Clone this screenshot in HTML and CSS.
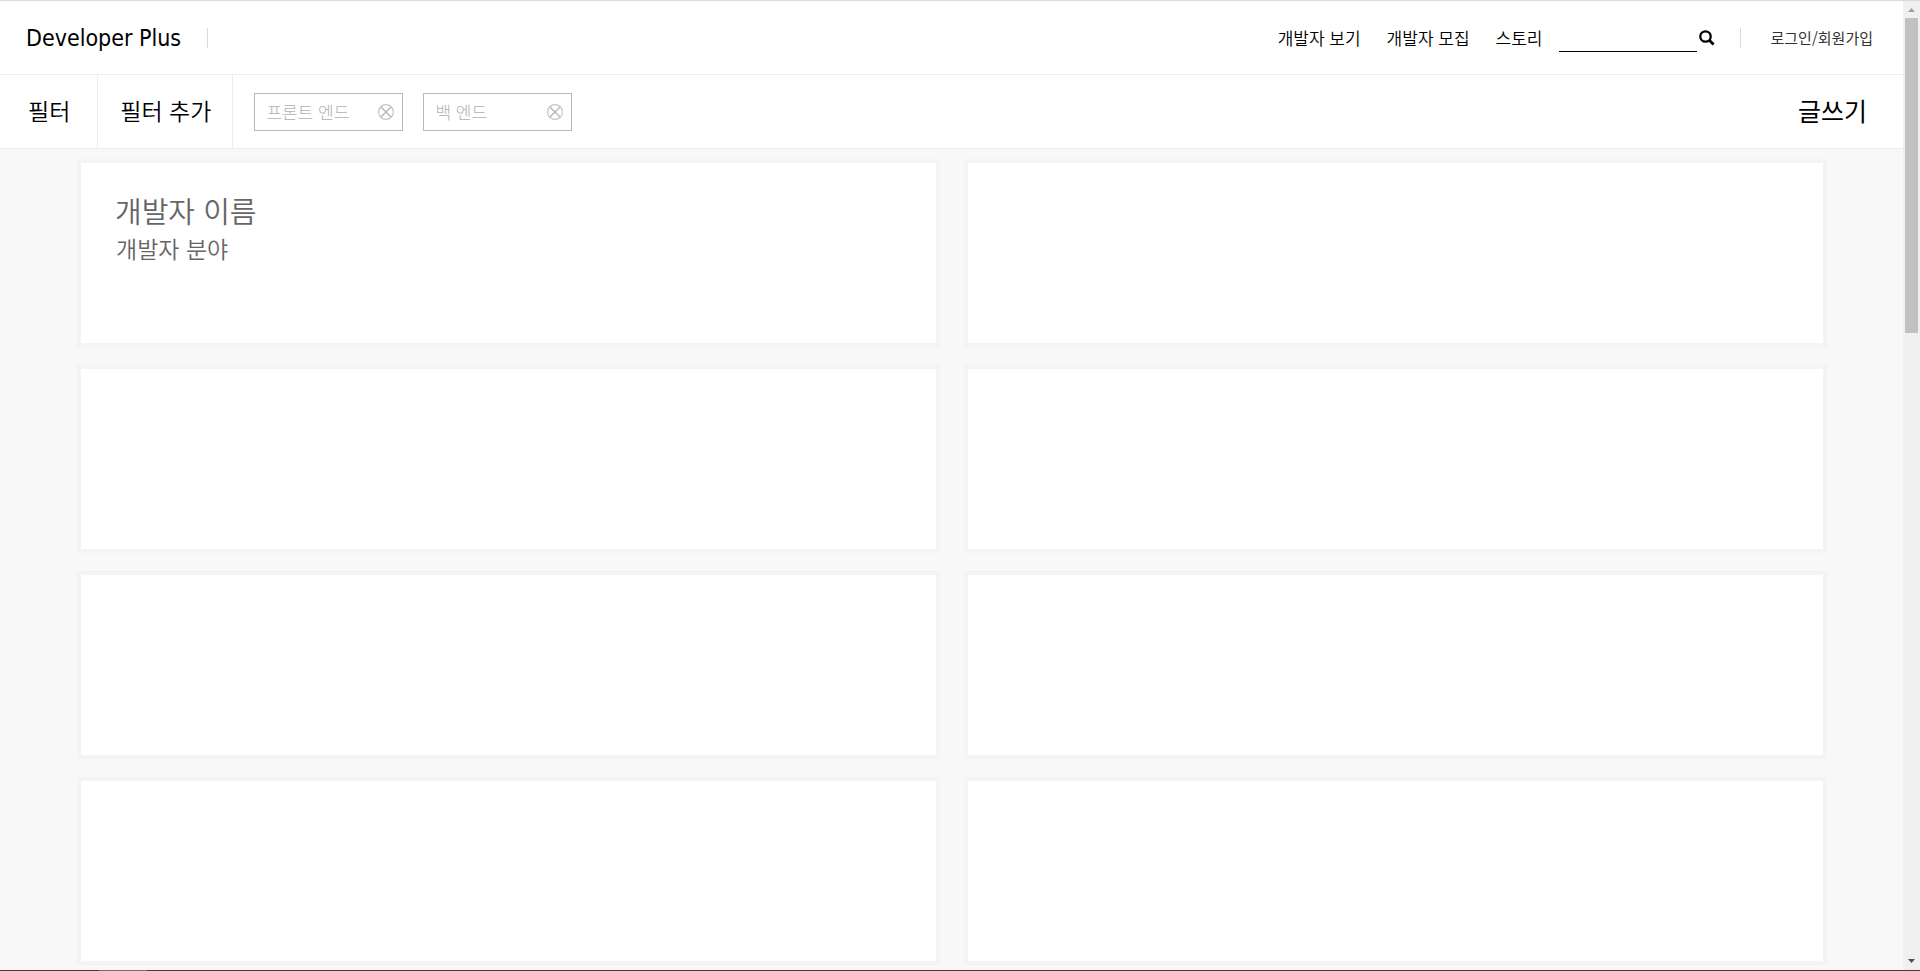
FILE: index.html
```html
<!DOCTYPE html>
<html lang="ko">
<head>
<meta charset="utf-8">
<title>Developer Plus</title>
<link rel="stylesheet" href="styles.css">
</head>
<body>
<div class="window">
  <div class="page">
    <header class="header">
      <a class="brand" href="#">Developer Plus</a>
      <span class="divider"></span>
      <nav class="nav">
        <a href="#">개발자 보기</a>
        <a href="#">개발자 모집</a>
        <a href="#">스토리</a>
      </nav>
      <form class="search">
        <input class="search-input" type="text" aria-label="검색">
        <button class="search-button" type="button" aria-label="검색">
          <svg viewBox="0 0 16 16" width="16" height="16"><circle cx="6.5" cy="6.5" r="5.2" fill="none" stroke="#000" stroke-width="2.3"/><path d="M10.3 10.3L14.6 14.6" stroke="#000" stroke-width="2.8"/></svg>
        </button>
      </form>
      <span class="divider"></span>
      <a class="login" href="#">로그인/회원가입</a>
    </header>
    <section class="filters">
      <h2 class="filter-title">필터</h2>
      <button class="filter-add" type="button">필터 추가</button>
      <div class="chips">
        <div class="chip">
          <span>프론트 엔드</span>
          <button class="chip-remove" type="button" aria-label="프론트 엔드 삭제">
            <svg viewBox="0 0 16 16" width="16" height="16" fill="none"><circle cx="8" cy="8" r="7.4" stroke="#c4c4c4" stroke-width="1.2"/><path d="M3.2 3.2L12.8 12.8M12.8 3.2L3.2 12.8" stroke="#b4b4b4" stroke-width="1.4"/></svg>
          </button>
        </div>
        <div class="chip">
          <span>백 엔드</span>
          <button class="chip-remove" type="button" aria-label="백 엔드 삭제">
            <svg viewBox="0 0 16 16" width="16" height="16" fill="none"><circle cx="8" cy="8" r="7.4" stroke="#c4c4c4" stroke-width="1.2"/><path d="M3.2 3.2L12.8 12.8M12.8 3.2L3.2 12.8" stroke="#b4b4b4" stroke-width="1.4"/></svg>
          </button>
        </div>
      </div>
      <button class="write" type="button">글쓰기</button>
    </section>
    <main class="cards">
      <article class="card">
        <h3 class="card-name">개발자 이름</h3>
        <p class="card-field">개발자 분야</p>
      </article>
      <article class="card"></article>
      <article class="card"></article>
      <article class="card"></article>
      <article class="card"></article>
      <article class="card"></article>
      <article class="card"></article>
      <article class="card"></article>
    </main>
  </div>
  <div class="scrollbar">
    <svg class="arrow" viewBox="0 0 17 17" width="17" height="17"><path d="M5 11h7L8.500 7z" fill="#a0a0a0"/></svg>
    <div class="thumb"></div>
    <svg class="arrow" viewBox="0 0 17 17" width="17" height="17"><path d="M5 6h7L8.500 10z" fill="#505050"/></svg>
  </div>
</div>
<div class="taskbar"><span class="taskbar-active"></span></div>
</body>
</html>
```
FILE: styles.css
```css
* {
  box-sizing: border-box;
}

body {
  margin: 0;
  min-height: 100vh;
  display: flex;
  flex-direction: column;
  border-top: 1px solid #dadada;
  background: #f8f8f8;
  color: #000;
  font-family: "Noto Sans CJK KR", sans-serif;
  font-weight: 350;
}

a {
  color: inherit;
  text-decoration: none;
}

button {
  padding: 0;
  border: 0;
  background: none;
  color: inherit;
  font: inherit;
}

svg {
  display: block;
}

.window {
  flex: 1;
  display: flex;
}

.page {
  flex: 1;
}

.header {
  display: flex;
  align-items: center;
  height: 74px;
  padding: 0 30px 0 26px;
  border-bottom: 1px solid #ececec;
  background: #fff;
}

.brand {
  margin-right: 26px;
  font-family: "DejaVu Sans Condensed", "DejaVu Sans", sans-serif;
  font-size: 23px;
  font-weight: 400;
}

.divider {
  width: 1px;
  height: 20px;
  background: #dadada;
}

.nav {
  display: flex;
  gap: 26px;
  margin-left: auto;
  font-size: 17px;
}

.search {
  display: flex;
  align-items: center;
  gap: 2px;
  margin: 0 25px 0 16px;
}

.search-input {
  width: 138px;
  height: 28px;
  padding: 0;
  border: 0;
  border-bottom: 1px solid #000;
  background: none;
  font: inherit;
  outline: none;
}

.login {
  margin-left: 30px;
  color: #333;
  font-size: 15px;
  font-weight: 400;
}

.filters {
  display: flex;
  align-items: center;
  height: 74px;
  padding-right: 36px;
  border-bottom: 1px solid #ececec;
  background: #fff;
}

.filter-title,
.filter-add {
  display: flex;
  align-items: center;
  align-self: stretch;
  margin: 0;
  border-right: 1px solid #ececec;
  font-size: 23px;
  font-weight: 350;
}

.filter-title {
  padding: 0 27px 3px 28px;
}

.filter-add {
  padding: 0 21px 3px 22px;
}

.chips {
  display: flex;
  gap: 20px;
  margin-left: 21px;
}

.chip {
  display: flex;
  align-items: center;
  justify-content: space-between;
  width: 149px;
  height: 38px;
  padding: 0 8px 0 11px;
  border: 1px solid #b8b8b8;
  color: #b0b0b0;
  font-size: 17px;
  font-weight: 300;
}

.write {
  margin-left: auto;
  padding-bottom: 4px;
  font-size: 25px;
  font-weight: 400;
}

.cards {
  display: grid;
  grid-template-columns: 1fr 1fr;
  gap: 18px 24px;
  padding: 10px 76px 5px 77px;
}

.card {
  min-height: 188px;
  padding: 25px 34px;
  border: 4px solid #f4f4f4;
  background: #fff;
  color: #666;
}

.card-name {
  margin: 0;
  font-size: 29px;
  font-weight: 350;
  line-height: 44px;
}

.card-field {
  margin: 0;
  padding-left: 1px;
  font-size: 23px;
  line-height: 32px;
}

.scrollbar {
  display: flex;
  flex-direction: column;
  width: 17px;
  background: #f0f0f0;
}

.thumb {
  height: 315px;
  margin: 0 2px auto;
  background: #c1c1c1;
}

.taskbar {
  height: 1px;
  padding-left: 99px;
  background: #3e3d45;
}

.taskbar-active {
  display: block;
  width: 48px;
  height: 1px;
  background: #707070;
}
```
